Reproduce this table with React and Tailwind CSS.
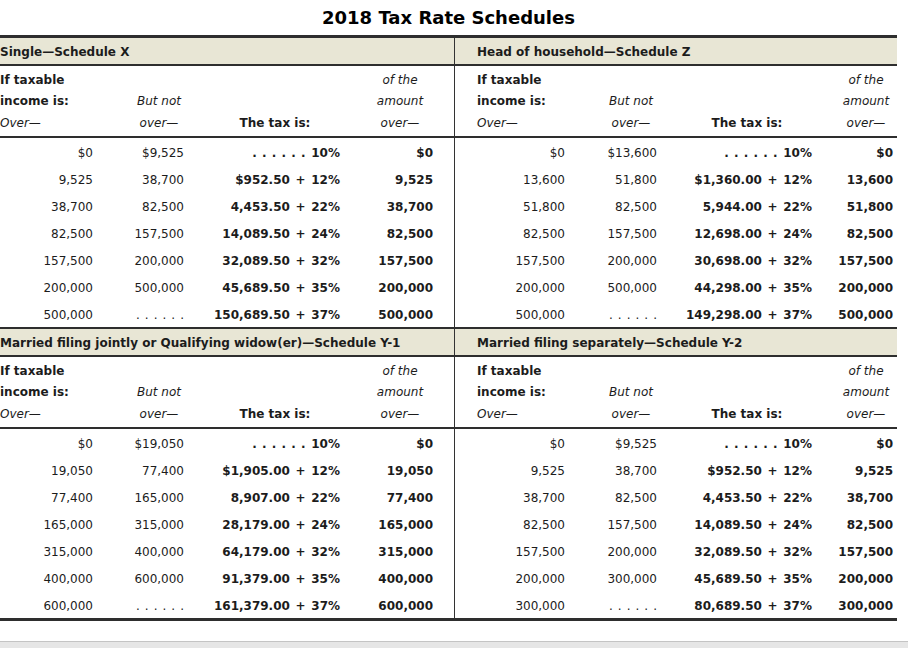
import React from "react";

const DOTS = ". . . . . .";

const sections = [
  {
    left: {
      title: "Single—Schedule X",
      rows: [
        ["$0", "$9,525", "10%", "$0"],
        ["9,525", "38,700", "$952.50 + 12%", "9,525"],
        ["38,700", "82,500", "4,453.50 + 22%", "38,700"],
        ["82,500", "157,500", "14,089.50 + 24%", "82,500"],
        ["157,500", "200,000", "32,089.50 + 32%", "157,500"],
        ["200,000", "500,000", "45,689.50 + 35%", "200,000"],
        ["500,000", DOTS, "150,689.50 + 37%", "500,000"],
      ],
    },
    right: {
      title: "Head of household—Schedule Z",
      rows: [
        ["$0", "$13,600", "10%", "$0"],
        ["13,600", "51,800", "$1,360.00 + 12%", "13,600"],
        ["51,800", "82,500", "5,944.00 + 22%", "51,800"],
        ["82,500", "157,500", "12,698.00 + 24%", "82,500"],
        ["157,500", "200,000", "30,698.00 + 32%", "157,500"],
        ["200,000", "500,000", "44,298.00 + 35%", "200,000"],
        ["500,000", DOTS, "149,298.00 + 37%", "500,000"],
      ],
    },
  },
  {
    left: {
      title: "Married filing jointly or Qualifying widow(er)—Schedule Y-1",
      rows: [
        ["$0", "$19,050", "10%", "$0"],
        ["19,050", "77,400", "$1,905.00 + 12%", "19,050"],
        ["77,400", "165,000", "8,907.00 + 22%", "77,400"],
        ["165,000", "315,000", "28,179.00 + 24%", "165,000"],
        ["315,000", "400,000", "64,179.00 + 32%", "315,000"],
        ["400,000", "600,000", "91,379.00 + 35%", "400,000"],
        ["600,000", DOTS, "161,379.00 + 37%", "600,000"],
      ],
    },
    right: {
      title: "Married filing separately—Schedule Y-2",
      rows: [
        ["$0", "$9,525", "10%", "$0"],
        ["9,525", "38,700", "$952.50 + 12%", "9,525"],
        ["38,700", "82,500", "4,453.50 + 22%", "38,700"],
        ["82,500", "157,500", "14,089.50 + 24%", "82,500"],
        ["157,500", "200,000", "32,089.50 + 32%", "157,500"],
        ["200,000", "300,000", "45,689.50 + 35%", "200,000"],
        ["300,000", DOTS, "80,689.50 + 37%", "300,000"],
      ],
    },
  },
];

// column layout for each side (widths, data padding, header padding)
const layouts = {
  left: {
    grid: "grid grid-cols-[100px_90px_160px_104px]",
    titlePad: "pl-0",
    data: ["pr-[7px]", "pr-[6px]", "pr-[10px]", "pr-[21px]"],
    head: ["pl-0 text-left", "pl-[28px] text-center", "pl-[10px] text-center", "pr-[4px] text-center"],
  },
  right: {
    grid: "grid grid-cols-[120px_90px_156px_76px]",
    titlePad: "pl-[22px]",
    data: ["pr-[10px]", "pr-[8px]", "pr-[9px]", "pr-[4px]"],
    head: ["pl-[22px] text-left", "pl-[22px] text-center", "pl-[8px] text-center", "pl-[14px] text-center"],
  },
};

const headCols = [
  [
    ["If taxable", "font-bold"],
    ["income is:", "font-bold"],
    ["Over—", "italic"],
  ],
  [
    ["", ""],
    ["But not", "italic"],
    ["over—", "italic"],
  ],
  [
    ["", ""],
    ["", ""],
    ["The tax is:", "font-bold"],
  ],
  [
    ["of the", "italic"],
    ["amount", "italic"],
    ["over—", "italic"],
  ],
];

const dataWeight = ["font-normal", "font-normal", "font-bold [word-spacing:1.5px]", "font-bold"];

const Cell = ({ value, ci }) => {
  if (value === DOTS) return <span className="[word-spacing:1.2px]">{DOTS}</span>;
  if (ci === 2 && value === "10%")
    return (
      <>
        <span className="[word-spacing:1px]">{DOTS}</span> 10%
      </>
    );
  return value;
};

const HeaderBlock = ({ side }) => {
  const lay = layouts[side];
  return (
    <div className={`${lay.grid} pt-[4px] pb-[3px]`}>
      {headCols.map((col, ci) => (
        <div key={ci} className={`flex flex-col ${lay.head[ci]}`}>
          {col.map(([txt, cls], ri) => (
            <div key={ri} className={`h-[21px] leading-[21px] ${ri === 2 ? "pt-[1px]" : ""} ${cls}`}>
              {txt}
            </div>
          ))}
        </div>
      ))}
    </div>
  );
};

const DataBlock = ({ side, rows }) => {
  const lay = layouts[side];
  return (
    <div className={lay.grid}>
      {rows.map((row, ri) =>
        row.map((cell, ci) => (
          <div
            key={`${ri}-${ci}`}
            className={`h-[27px] leading-[27px] pt-[2px] text-right whitespace-nowrap ${lay.data[ci]} ${dataWeight[ci]}`}
          >
            <Cell value={cell} ci={ci} />
          </div>
        ))
      )}
    </div>
  );
};

const Section = ({ section }) => (
  <div>
    {/* title band */}
    <div className="flex bg-[#e8e6d5] h-[26px] font-bold">
      <div className={`w-[455px] h-full flex items-center pt-[2px] border-r border-[#333] ${layouts.left.titlePad}`}>
        {section.left.title}
      </div>
      <div className={`flex-1 flex items-center pt-[2px] ${layouts.right.titlePad}`}>{section.right.title}</div>
    </div>
    <div className="h-[2px] bg-[#2e2e2e]" />
    {/* column heads */}
    <div className="flex">
      <div className="w-[455px] border-r border-[#333]">
        <HeaderBlock side="left" />
      </div>
      <div className="flex-1">
        <HeaderBlock side="right" />
      </div>
    </div>
    <div className="h-[2px] bg-[#2e2e2e]" />
    {/* brackets */}
    <div className="flex">
      <div className="w-[455px] border-r border-[#333]">
        <DataBlock side="left" rows={section.left.rows} />
      </div>
      <div className="flex-1">
        <DataBlock side="right" rows={section.right.rows} />
      </div>
    </div>
  </div>
);

export default function App() {
  return (
    <div className="w-[908px] h-[648px] bg-white text-[#1c1c1c] text-[12px] font-['DejaVu_Sans','Verdana',sans-serif] flex flex-col overflow-hidden">
      <div className="w-[897px]">
        <div className="h-[35px] flex items-center justify-center text-[18px] font-bold text-black">
          2018 Tax Rate Schedules
        </div>
        <div className="h-[3px] bg-[#2e2e2e]" />
        <Section section={sections[0]} />
        <div className="h-[2px] bg-[#2e2e2e]" />
        <Section section={sections[1]} />
        <div className="h-[3px] bg-[#2e2e2e]" />
      </div>
      <div className="mt-auto h-[7px] bg-[#e6e6e6] border-t border-[#c4c4c4]" />
    </div>
  );
}
